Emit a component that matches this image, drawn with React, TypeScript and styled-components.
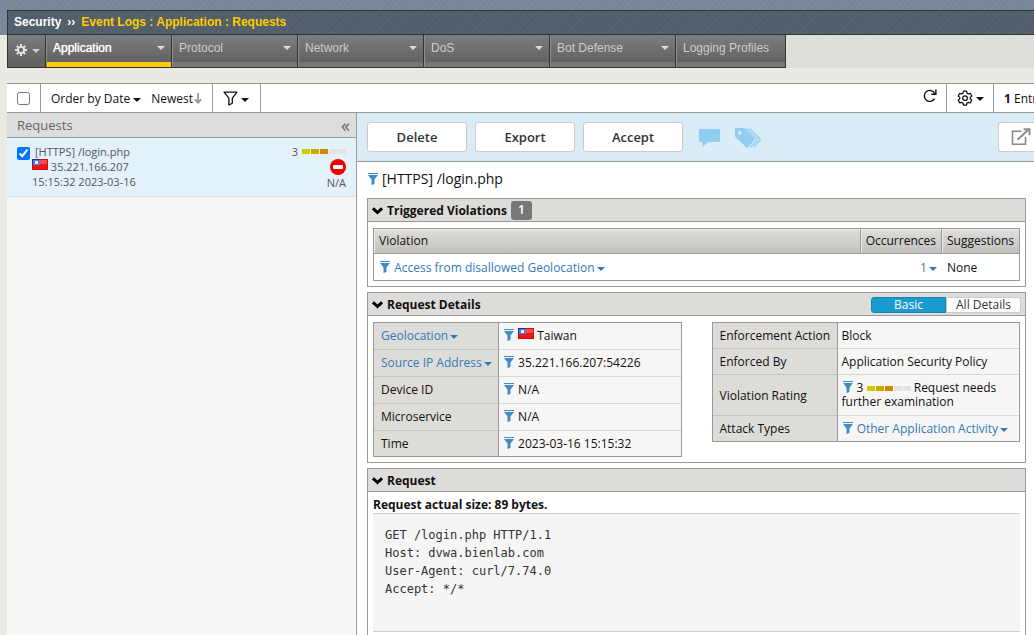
import React from "react";
import styled, { createGlobalStyle, css } from "styled-components";

const line = "#999999";
const link = "#337ab7";

const GlobalStyle = createGlobalStyle`
  * { box-sizing: border-box; }
  body {
    margin: 0;
    background: #eae9e4;
    color: #111;
    font: 12px/16px "Open Sans", sans-serif;
    overflow-x: hidden;
  }
  button { font: inherit; color: inherit; background: none; border: 0; padding: 0; margin: 0; cursor: pointer; }
  input { margin: 0; }
  svg { display: block; flex: none; }
  a { color: ${link}; text-decoration: none; }
`;

/* ---------- icons ---------- */

const CaretSvg = styled.svg`
  display: inline-block;
  margin-left: 2px;
  vertical-align: 1px;
`;

const Caret = ({ color = "currentColor" }: { color?: string }) => (
  <CaretSvg width="8" height="4" viewBox="0 0 8 4" aria-hidden="true">
    <path d="M0 0h8L4 4z" fill={color} />
  </CaretSvg>
);

const FunnelSvg = styled.svg`
  display: inline-block;
  margin: 0 1px;
  vertical-align: -1px;
`;

const Funnel = () => (
  <FunnelSvg width="10" height="12" viewBox="0 0 10 12" aria-hidden="true">
    <path d="M0 0h10v1H0zM0 2h10L6.500 6.500V11L3.500 12V6.500z" fill="#428bca" />
  </FunnelSvg>
);

const FlagSvg = styled.svg`
  display: inline-block;
  vertical-align: 1px;
`;

const TaiwanFlag = () => (
  <FlagSvg width="16" height="11" viewBox="0 0 16 11" role="img" aria-label="Taiwan flag">
    <rect width="16" height="11" fill="#f01414" />
    <rect x="1" y="1" width="14" height="4" fill="#fb4a4a" />
    <rect width="8" height="6" fill="#2b44b8" />
    <rect x="1" y="1" width="7" height="5" fill="#5d78dc" />
    <rect x="3" y="2" width="3" height="3" rx="1" fill="#fff" />
    <path d="M0.500 0.500h15v10h-15z" fill="none" stroke="#b80c0c" strokeOpacity=".6" />
    <path d="M0.500 6V0.500H8" fill="none" stroke="#1a2f9c" />
  </FlagSvg>
);

const RatingSvg = styled.svg`
  display: inline-block;
  vertical-align: 1px;
`;

const RatingBar = () => (
  <RatingSvg width="44" height="5" viewBox="0 0 44 5" aria-hidden="true">
    {["#cccc00", "#ccaa00", "#cc8800", "#e3e3e3", "#e3e3e3"].map((fill, i) => (
      <rect key={i} x={i * 9} width="8" height="5" fill={fill} />
    ))}
  </RatingSvg>
);

const NavGear = () => (
  <svg width="12" height="12" viewBox="0 0 12 12" fill="none" aria-hidden="true">
    <circle cx="6" cy="6" r="3.1" stroke="#e6e6e6" strokeWidth="1.9" />
    <path
      d="M6 0v2.200M6 9.800V12M0 6h2.200M9.800 6H12M1.800 1.800l1.500 1.500M8.700 8.700l1.500 1.500M10.200 1.800L8.700 3.300M3.300 8.700l-1.500 1.500"
      stroke="#e6e6e6"
      strokeWidth="1.900"
    />
  </svg>
);

const GearOutline = () => (
  <svg width="16" height="16" viewBox="0 0 24 24" fill="none" stroke="#111" strokeWidth="1.900" aria-hidden="true">
    <path d="M9.700 1.800h4.600l.7 3 1.900 1.100 3-.9 2.300 4-2.300 2.100v2.200l2.300 2.100-2.300 4-3-.9-1.900 1.100-.7 3H9.700l-.7-3-1.900-1.100-3 .9-2.300-4 2.300-2.100v-2.200L1.800 9l2.300-4 3 .9L9 4.800z" strokeLinejoin="round" />
    <circle cx="12" cy="12.200" r="3.500" />
  </svg>
);

const FunnelOutline = () => (
  <svg width="15" height="15" viewBox="0 0 15 15" fill="none" stroke="#111" strokeWidth="1.300" aria-hidden="true">
    <path d="M1 1.200h13L9.300 7.200v5L5.900 14V7.200z" strokeLinejoin="round" />
  </svg>
);

const ArrowDown = () => (
  <svg width="8" height="11" viewBox="0 0 8 11" fill="none" stroke="#999" strokeWidth="1.800" aria-hidden="true">
    <path d="M4 0v9.500M0.800 6.300L4 9.700l3.200-3.400" />
  </svg>
);

const Reload = () => (
  <svg width="14" height="14" viewBox="0 0 14 14" fill="none" stroke="#111" strokeWidth="1.400" aria-hidden="true">
    <path d="M11.600 9.600A5.500 5.500 0 1 1 11.800 4.600" />
    <path d="M12.900 0.600v4.600H8.300" />
  </svg>
);

const Comment = () => (
  <svg width="22" height="18" viewBox="0 0 22 18" aria-hidden="true">
    <path d="M1 0h19a1 1 0 0 1 1 1v11a1 1 0 0 1-1 1H9L3.500 18v-5H1A1 1 0 0 1 0 12V1A1 1 0 0 1 1 0z" fill="#90cef0" />
  </svg>
);

const Tags = () => (
  <svg width="26" height="20" viewBox="0 0 26 20" aria-hidden="true">
    <path
      fillRule="evenodd"
      d="M0 1.200Q0 0 1.200 0H8.600Q9.600 0 10.400.8L19.700 10.300Q20.500 11.300 19.700 12.100L13 19.300Q12.200 20.200 11.200 19.300L.9 9.600Q0 8.800 0 7.800zM4.800 3a1.900 1.900 0 1 0 0 3.800 1.900 1.900 0 0 0 0-3.800z"
      fill="#90cef0"
    />
    <path d="M11.500 .5L22 10.800Q22.500 11.500 22 12.200L15.600 19.300" fill="none" stroke="#90cef0" strokeWidth="1.300" />
    <path d="M14.500 .5L24.900 10.800Q25.500 11.500 24.900 12.200L18.400 19.300" fill="none" stroke="#90cef0" strokeWidth="1.300" />
  </svg>
);

const NoEntry = () => (
  <svg width="16" height="16" viewBox="0 0 16 16" role="img" aria-label="Blocked">
    <circle cx="8" cy="8" r="8" fill="#f00000" />
    <rect x="3" y="6" width="10" height="4" rx="1" fill="#fff" />
  </svg>
);

const PopOut = () => (
  <svg width="20" height="18" viewBox="0 0 20 18" fill="none" stroke="#8a8a8a" strokeWidth="1.600" aria-hidden="true">
    <path d="M10.500 3.300H1.500v13h13V9" />
    <path d="M6.500 11.800L17 2" strokeWidth="1.900" />
    <path d="M12.500 1.200h6v6" strokeWidth="1.900" />
  </svg>
);

const Chevron = () => (
  <svg width="11" height="8" viewBox="0 0 11 8" fill="none" stroke="#000" strokeWidth="3" aria-hidden="true">
    <path d="M1 1.300l4.500 4.200L10 1.300" />
  </svg>
);

/* ---------- page header ---------- */

const Page = styled.div`
  display: flex;
  flex-direction: column;
  min-height: 100vh;
  font-family: "Open Sans", sans-serif;
`;

const Band = styled.header`
  padding: 10px 0 0 7px;
  background: repeating-linear-gradient(135deg, #778696 0 2px, #7c8b9b 2px 4px);
`;

const Crumbs = styled.div`
  display: flex;
  align-items: center;
  gap: 6px;
  height: 25px;
  padding: 0 6px 2px;
  border: solid #333;
  border-width: 1px 0 1px 1px;
  background: repeating-linear-gradient(135deg, #515d68 0 2px, #55626d 2px 4px);
  color: #fff;
  font: bold 12px/16px "Liberation Sans", Arial, sans-serif;
`;

const CrumbPath = styled.span`
  color: #ffcc00;
`;

const NavRow = styled.nav`
  display: flex;
  margin: 0 0 15px 7px;
  background: #deddd9;
`;

const Tab = styled.button<{ $active?: boolean; $kind?: "gear" | "plain" }>`
  display: flex;
  align-items: flex-start;
  justify-content: space-between;
  width: 126px;
  height: 33px;
  padding: 5px 6px 0 7px;
  border: solid #333;
  border-width: 0 1px 1px 0;
  box-shadow: inset 1px 0 0 #8e8e8e, inset 0 -5px 0 ${(p) => (p.$active ? "#ffcc00" : "#777")};
  background: linear-gradient(#7d7d7d, #636363 26px);
  color: ${(p) => (p.$active ? "#fff" : "#ccc")};
  font: 12px/16px "Liberation Sans", Arial, sans-serif;
  text-shadow: 0 0 1px ${(p) => (p.$active ? "#fff" : "transparent")};

  ${(p) => p.$kind === "plain" && css`width: 110px;`}
  ${(p) =>
    p.$kind === "gear" &&
    css`
      width: 39px;
      padding: 0 5px 2px 7px;
      align-items: center;
      border-left-width: 1px;
      box-shadow: none;
    `}

  ${CaretSvg} {
    margin-top: ${(p) => (p.$kind === "gear" ? 2 : 6)}px;
  }
`;

/* ---------- toolbar ---------- */

const Workspace = styled.main`
  display: flex;
  flex-direction: column;
  flex: 1;
  margin-left: 7px;
`;

const Toolbar = styled.div`
  display: flex;
  height: 30px;
  border: solid ${line};
  border-width: 1px 0;
  background: #fff;
`;

const Cell = styled.div<{ $pad: string }>`
  display: flex;
  align-items: center;
  gap: 10px;
  padding: ${(p) => p.$pad};
  border-right: 1px solid ${line};
`;

const Spacer = styled.div`
  flex: 1;
`;

const IconButton = styled.button`
  display: flex;
  align-items: center;
  gap: 1px;

  ${CaretSvg} {
    margin-top: 2px;
  }
`;

const EntryCount = styled.div`
  width: 40px;
  padding: 7px 0 0 10px;
  overflow: hidden;
  white-space: nowrap;
`;

const Check = styled.input`
  flex: none;
  width: 13px;
  height: 13px;
`;

/* ---------- request list ---------- */

const Panes = styled.div`
  display: flex;
  flex: 1;
`;

const Sidebar = styled.aside`
  flex: none;
  width: 350px;
  border-right: 1px solid ${line};
  background: #f7f6f5;
`;

const SideHead = styled.div`
  display: flex;
  align-items: center;
  justify-content: space-between;
  height: 25px;
  padding: 0 6px 0 10px;
  border-bottom: 1px solid ${line};
  background: #dddddd;
  color: #666;
  font-size: 13px;
`;

const Collapse = styled.button`
  font-size: 18px;
  line-height: 16px;
`;

const RequestItem = styled.label`
  display: flex;
  height: 59px;
  padding: 6px 10px 0;
  border-bottom: 1px solid #ddd;
  background: #e3f1fb;
  color: #555;
  font-size: 11px;
  line-height: 15px;

  ${Check} {
    margin-top: 3px;
  }
`;

const ItemText = styled.div`
  flex: 1;
  padding-left: 2px;
`;

const ItemTitle = styled.div`
  padding-left: 3px;
`;

const ItemSide = styled.div`
  display: flex;
  flex-direction: column;
  align-items: flex-end;
`;

const Score = styled.div`
  display: flex;
  align-items: center;
  gap: 4px;
`;

/* ---------- request details ---------- */

const Details = styled.section`
  flex: 1;
  min-width: 0;
  background: #fff;
`;

const Actions = styled.div`
  display: flex;
  align-items: center;
  gap: 8px;
  height: 49px;
  padding-left: 10px;
  border-bottom: 1px solid ${line};
  background: #daecf6;
`;

const ActionButton = styled.button`
  width: 100px;
  height: 30px;
  border: 1px solid #ccc;
  border-radius: 3px;
  background: #fff;
  color: #333;
  font-size: 13px;
  font-weight: 600;
`;

const PopOutButton = styled.button`
  width: 36px;
  height: 30px;
  padding-left: 12px;
  border: 1px solid #ccc;
  border-right: 0;
  border-radius: 3px 0 0 3px;
  background: #fff;
`;

const IconPair = styled.div`
  display: flex;
  align-items: center;
  gap: 14px;
  padding: 2px 0 0 8px;
`;

const DetailsBody = styled.div`
  display: flex;
  flex-direction: column;
  gap: 5px;
  padding: 7px 8px 0 10px;
`;

const Title = styled.h1`
  margin: 0;
  padding-bottom: 5px;
  font-size: 14px;
  font-weight: 400;
  line-height: 19px;

  ${FunnelSvg} {
    margin-right: 4px;
  }
`;

const Section = styled.section`
  border: 1px solid ${line};
`;

const SectionHead = styled.h2`
  display: flex;
  align-items: center;
  gap: 4px;
  height: 23px;
  margin: 0;
  padding: 1px 4px 0;
  border-bottom: 1px solid ${line};
  background: #dddcd8;
  font-size: 12px;
  font-weight: 700;
`;

const Badge = styled.span`
  padding: 1px 7px 2px;
  border-radius: 3px;
  background: #777;
  color: #fff;
  font-weight: 600;
`;

const Toggle = styled.button<{ $on?: boolean }>`
  width: 75px;
  height: 16px;
  border: 1px solid ${(p) => (p.$on ? "#1784b4" : "#ccc")};
  border-radius: ${(p) => (p.$on ? "3px 0 0 3px" : "0 3px 3px 0")};
  background: ${(p) => (p.$on ? "#1a9bd0" : "#fff")};
  color: ${(p) => (p.$on ? "#fff" : "#333")};
  font-weight: 400;
  line-height: 14px;
`;

const ToggleGroup = styled.div`
  display: flex;
`;

const SectionBody = styled.div`
  display: flex;
  align-items: flex-start;
  gap: 30px;
  padding: 6px 5px 5px;
`;

const ViolationTable = styled.table`
  width: 100%;
  border: 1px solid ${line};
  border-spacing: 0;

  th {
    height: 25px;
    padding: 0 5px;
    border-right: 1px solid ${line};
    border-bottom: 1px solid ${line};
    background: linear-gradient(#e0dfdb, #c2c0bd);
    box-shadow: inset 1px 1px 0 #eeeeec;
    font-weight: 400;
    text-align: left;
  }
  th:last-child { border-right: 0; }
  td { height: 26px; padding: 1px 5px 0; }
`;

const NumberCell = styled.td`
  text-align: right;
`;

const FieldTable = styled.table<{ $dense?: boolean }>`
  flex: 1 1 0;
  width: 0;
  border: 1px solid ${line};
  border-spacing: 0;
  table-layout: fixed;

  th, td {
    padding: 5px 4px ${(p) => (p.$dense ? 4 : 5)}px;
    border-bottom: 1px solid #d8d8d8;
    background: #f7f6f5;
    font-weight: 400;
    text-align: left;
  }
  th {
    width: 125px;
    padding-left: 7px;
    padding-right: 0;
    border-right: 1px solid ${line};
    border-bottom-color: #c4c3c0;
    background: #dddcd8;
    white-space: nowrap;
  }
  tr:last-child > * { padding-bottom: 4px; border-bottom: 0; }
`;

const Wrapped = styled.div`
  padding: 1px 0 2px;
  line-height: 14px;
`;

const SizeNote = styled.div`
  padding: 5px 5px 0;
  font-weight: 700;
`;

const Raw = styled.pre`
  min-height: 119px;
  margin: 0 5px 5px;
  padding: 12px;
  border: solid #ccc;
  border-width: 1px 0;
  background: #f5f5f5;
  color: #333;
  font: 12px/18px "DejaVu Sans Mono", monospace;
`;

const tabs = ["Application", "Protocol", "Network", "DoS", "Bot Defense"];

const fields: [React.ReactNode, React.ReactNode][] = [
  [<a href="#geolocation">Geolocation<Caret /></a>, <><Funnel /> <TaiwanFlag /> Taiwan</>],
  [<a href="#source">Source IP Address<Caret /></a>, <><Funnel /> 35.221.166.207:54226</>],
  ["Device ID", <><Funnel /> N/A</>],
  ["Microservice", <><Funnel /> N/A</>],
  ["Time", <><Funnel /> 2023-03-16 15:15:32</>],
];

const outcome: [React.ReactNode, React.ReactNode][] = [
  ["Enforcement Action", "Block"],
  ["Enforced By", "Application Security Policy"],
  ["Violation Rating", <Wrapped><Funnel /> 3 <RatingBar /> Request needs further examination</Wrapped>],
  ["Attack Types", <><Funnel /> <a href="#attack">Other Application Activity<Caret /></a></>],
];

const Fields = ({ rows, dense }: { rows: [React.ReactNode, React.ReactNode][]; dense?: boolean }) => (
  <FieldTable $dense={dense}>
    <tbody>
      {rows.map(([name, value], i) => (
        <tr key={i}>
          <th scope="row">{name}</th>
          <td>{value}</td>
        </tr>
      ))}
    </tbody>
  </FieldTable>
);

export default function App() {
  return (
    <Page>
      <GlobalStyle />
      <Band>
        <Crumbs>
          <span>Security</span>
          <span>››</span>
          <CrumbPath>Event Logs : Application : Requests</CrumbPath>
        </Crumbs>
      </Band>
      <NavRow>
        <Tab $kind="gear" aria-label="Options"><NavGear /><Caret color="#ccc" /></Tab>
        {tabs.map((name, i) => (
          <Tab key={name} $active={i === 0}>{name}<Caret color="#ddd" /></Tab>
        ))}
        <Tab $kind="plain">Logging Profiles</Tab>
      </NavRow>

      <Workspace>
        <Toolbar>
          <Cell $pad="0 10px"><Check type="checkbox" aria-label="Select all requests" /></Cell>
          <Cell $pad="1px 10px 0">
            <IconButton>Order by Date<Caret /></IconButton>
            <IconButton>Newest<ArrowDown /></IconButton>
          </Cell>
          <Cell $pad="1px 11px 0 10px">
            <IconButton aria-label="Filter"><FunnelOutline /><Caret /></IconButton>
          </Cell>
          <Spacer />
          <Cell $pad="0 9px 4px 10px"><IconButton aria-label="Refresh"><Reload /></IconButton></Cell>
          <Cell $pad="0 9px 0 10px"><IconButton aria-label="Settings"><GearOutline /><Caret /></IconButton></Cell>
          <EntryCount><b>1</b> Entry</EntryCount>
        </Toolbar>

        <Panes>
          <Sidebar>
            <SideHead>Requests<Collapse aria-label="Collapse list">«</Collapse></SideHead>
            <RequestItem>
              <Check type="checkbox" defaultChecked />
              <ItemText>
                <ItemTitle>[HTTPS] /login.php</ItemTitle>
                <div><TaiwanFlag /> 35.221.166.207</div>
                <div>15:15:32 2023-03-16</div>
              </ItemText>
              <ItemSide>
                <Score>3<RatingBar /></Score>
                <NoEntry />
                <span>N/A</span>
              </ItemSide>
            </RequestItem>
          </Sidebar>

          <Details>
            <Actions>
              <ActionButton>Delete</ActionButton>
              <ActionButton>Export</ActionButton>
              <ActionButton>Accept</ActionButton>
              <IconPair>
                <IconButton aria-label="Comment"><Comment /></IconButton>
                <IconButton aria-label="Tags"><Tags /></IconButton>
              </IconPair>
              <Spacer />
              <PopOutButton aria-label="Open in new window"><PopOut /></PopOutButton>
            </Actions>

            <DetailsBody>
              <Title><Funnel />[HTTPS] /login.php</Title>

              <Section>
                <SectionHead><Chevron />Triggered Violations<Badge>1</Badge></SectionHead>
                <SectionBody>
                  <ViolationTable>
                    <colgroup><col /><col width="81" /><col width="77" /></colgroup>
                    <thead>
                      <tr><th>Violation</th><th>Occurrences</th><th>Suggestions</th></tr>
                    </thead>
                    <tbody>
                      <tr>
                        <td><Funnel /> <a href="#violation">Access from disallowed Geolocation<Caret /></a></td>
                        <NumberCell><a href="#occurrences">1<Caret /></a></NumberCell>
                        <td>None</td>
                      </tr>
                    </tbody>
                  </ViolationTable>
                </SectionBody>
              </Section>

              <Section>
                <SectionHead>
                  <Chevron />Request Details
                  <Spacer />
                  <ToggleGroup>
                    <Toggle $on>Basic</Toggle>
                    <Toggle>All Details</Toggle>
                  </ToggleGroup>
                </SectionHead>
                <SectionBody>
                  <Fields rows={fields} />
                  <Fields rows={outcome} dense />
                </SectionBody>
              </Section>

              <Section>
                <SectionHead><Chevron />Request</SectionHead>
                <SizeNote>Request actual size: 89 bytes.</SizeNote>
                <Raw>{"GET /login.php HTTP/1.1\nHost: dvwa.bienlab.com\nUser-Agent: curl/7.74.0\nAccept: */*"}</Raw>
              </Section>
            </DetailsBody>
          </Details>
        </Panes>
      </Workspace>
    </Page>
  );
}
